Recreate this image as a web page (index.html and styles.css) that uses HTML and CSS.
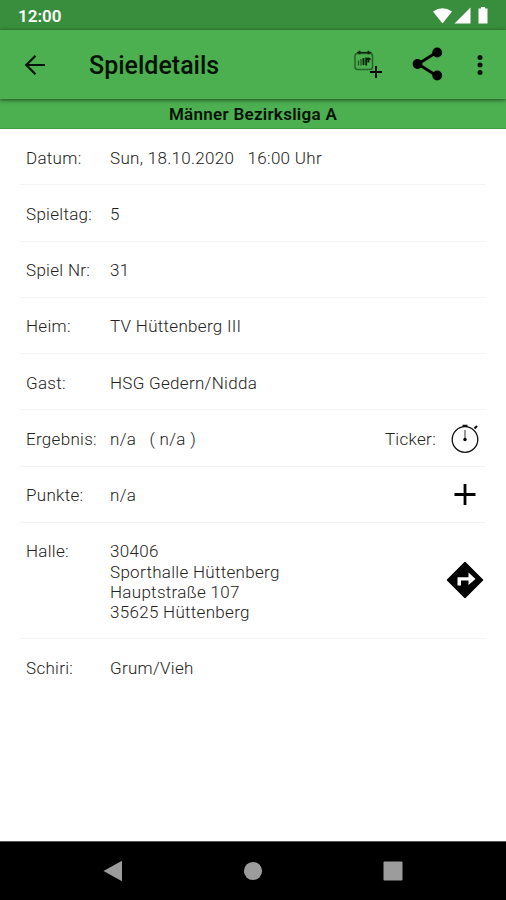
FILE: index.html
```html
<!DOCTYPE html>
<html lang="de">
<head>
<meta charset="utf-8">
<title>Spieldetails</title>
<link rel="stylesheet" href="styles.css">
</head>
<body>
<div class="screen">
  <div class="status">
    <span class="clock">12:00</span>
    <svg class="status-icons" width="58" height="20" viewBox="0 0 58 20" fill="#fff">
      <path d="M0 5.5Q9.500 -1 19 5.500L9.500 17.500Z"/>
      <path d="M37.500 1.500V17.500H21.500Z"/>
      <path d="M48 2.500V1H52V2.500H54.500V17.500H45.500V2.500Z"/>
    </svg>
  </div>
  <header class="toolbar">
    <svg class="back" width="24" height="24" viewBox="0 0 24 24" fill="none" stroke="#041204" stroke-width="2.200"><path d="M22 12H3.500M12.500 2.800L3.300 12L12.500 21.200"/></svg>
    <h1>Spieldetails</h1>
    <svg class="calendar" width="30" height="30" viewBox="0 0 30 30" fill="none" stroke="#0a260b">
      <rect x="1" y="3.500" width="17.500" height="16" rx="2.500" stroke-width="1.500" opacity=".55"/>
      <path d="M3 2.500H17.500" stroke-width="1.200"/>
      <path d="M5.500 .8V4.300M14.500 .8V4.300" stroke-width="1.800"/>
      <path d="M4.500 15.500V10.500M7 15.500V9" stroke-width="1.300" opacity=".65"/>
      <path d="M9.500 15V8M12.200 15.500V7.500M14.500 12.500V7.500M12 9H16.500" stroke-width="1.900"/>
      <path d="M22 16V28M16 22H28" stroke="#000" stroke-width="1.900"/>
    </svg>
    <svg class="share" width="32" height="34" viewBox="0 0 32 34" fill="#000">
      <path d="M25 5L6 17L25 29" fill="none" stroke="#000" stroke-width="2.800"/>
      <circle cx="25.200" cy="5.500" r="4.900"/><circle cx="5.500" cy="17" r="4.900"/><circle cx="25.200" cy="28.500" r="4.900"/>
    </svg>
    <svg class="more" width="6" height="22" viewBox="0 0 6 22" fill="#041204"><circle cx="3" cy="3.500" r="2.500"/><circle cx="3" cy="11" r="2.500"/><circle cx="3" cy="18.500" r="2.500"/></svg>
  </header>
  <div class="league">Männer Bezirksliga A</div>
  <main class="details">
    <div class="row"><span class="label">Datum:</span><span class="value">Sun, 18.10.2020 &nbsp; 16:00 Uhr</span></div>
    <div class="row"><span class="label">Spieltag:</span><span class="value">5</span></div>
    <div class="row"><span class="label">Spiel Nr:</span><span class="value">31</span></div>
    <div class="row"><span class="label">Heim:</span><span class="value">TV Hüttenberg III</span></div>
    <div class="row"><span class="label">Gast:</span><span class="value">HSG Gedern/Nidda</span></div>
    <div class="row"><span class="label">Ergebnis:</span><span class="value">n/a &nbsp; ( n/a )</span><span class="ticker">Ticker:</span>
      <svg class="action" width="38" height="38" viewBox="0 0 38 38" fill="none" stroke="#111">
        <circle cx="19" cy="19.500" r="12.800" stroke-width="1.300"/>
        <path d="M16.500 5.800H21.500M28.500 8.500L31 6" stroke-width="2.200"/>
        <path d="M19 19V10" stroke="#999" stroke-width="2"/>
        <circle cx="19" cy="19.500" r="1.700" fill="#000" stroke="none"/>
      </svg>
    </div>
    <div class="row"><span class="label">Punkte:</span><span class="value">n/a</span>
      <svg class="action" width="38" height="38" viewBox="0 0 38 38"><path d="M19 8V29M8.500 18.500H29.500" stroke="#000" stroke-width="2.800"/></svg>
    </div>
    <div class="row hall"><span class="label">Halle:</span><span class="value">30406<br>Sporthalle Hüttenberg<br>Hauptstraße 107<br>35625 Hüttenberg</span>
      <svg class="action" width="38" height="38" viewBox="0 0 38 38"><path d="M19 1.500L36.500 19L19 36.500L1.500 19Z" stroke="#000" stroke-width="1.500" stroke-linejoin="round"/><path d="M11.500 24.500V16.200H22.500V11.500L29.500 18L22.500 24V19.500H15V24.500Z" fill="#fff"/></svg>
    </div>
    <div class="row"><span class="label">Schiri:</span><span class="value">Grum/Vieh</span></div>
  </main>
  <nav class="navbar">
    <svg width="20" height="22" viewBox="0 0 20 22" fill="#9c9c9c"><path d="M.5 11L19 .8V21.200Z"/></svg>
    <svg width="20" height="22" viewBox="0 0 20 22" fill="#9c9c9c"><circle cx="10" cy="11" r="9.100"/></svg>
    <svg width="20" height="22" viewBox="0 0 20 22" fill="#9c9c9c"><rect x=".5" y="1.500" width="19" height="19" rx="1"/></svg>
  </nav>
</div>
</body>
</html>
```
FILE: styles.css
```css
* { box-sizing: border-box; }
body { margin: 0; font-family: Roboto, "Liberation Sans", sans-serif; }
svg { display: block; flex: none; }
.screen { width: 506px; height: 900px; display: flex; flex-direction: column; background: #fff; overflow: hidden; }
.status { height: 30px; flex: none; background: #388e3c; display: flex; align-items: center; justify-content: space-between; padding: 2px 15px 0 18px; }
.clock { color: #fff; font-size: 17px; font-weight: 600; line-height: 20px; }
.toolbar { height: 69px; flex: none; background: #4caf50; display: flex; align-items: center; padding: 0 23px; box-shadow: 0 1px 4px rgba(0, 0, 0, .6); position: relative; z-index: 1; }
.toolbar h1 { margin: 2px 0 0 42px; font-size: 25px; line-height: 30px; font-weight: 500; color: #041204; flex: 1; }
.calendar { margin-right: 28px; }
.share { margin-right: 33px; margin-top: -1px; }
.league { height: 30px; flex: none; background: #4caf50; border-bottom: 1px solid #419b45; text-align: center; font-size: 17px; line-height: 31px; font-weight: 600; letter-spacing: .28px; color: #041204; }
.details { flex: 1; padding: 0 20px; }
.row { height: 56.25px; border-bottom: 1px solid #f4f4f4; display: flex; align-items: flex-start; padding: 18.600px 2px 0 6px; font-size: 17px; line-height: 20.200px; font-weight: 350; letter-spacing: .3px; color: #222; }
.row:last-child { border-bottom: 0; }
.hall { height: 116.500px; }
.label { width: 84px; flex: none; }
.value { flex: 1; }
.ticker { margin-right: 10px; }
.action { margin-top: -9px; }
.hall .action { margin-top: 20px; }
.navbar { height: 59px; flex: none; background: #000; border-top: 1px solid #555; display: flex; justify-content: space-between; align-items: center; padding: 0 103px; }
```
